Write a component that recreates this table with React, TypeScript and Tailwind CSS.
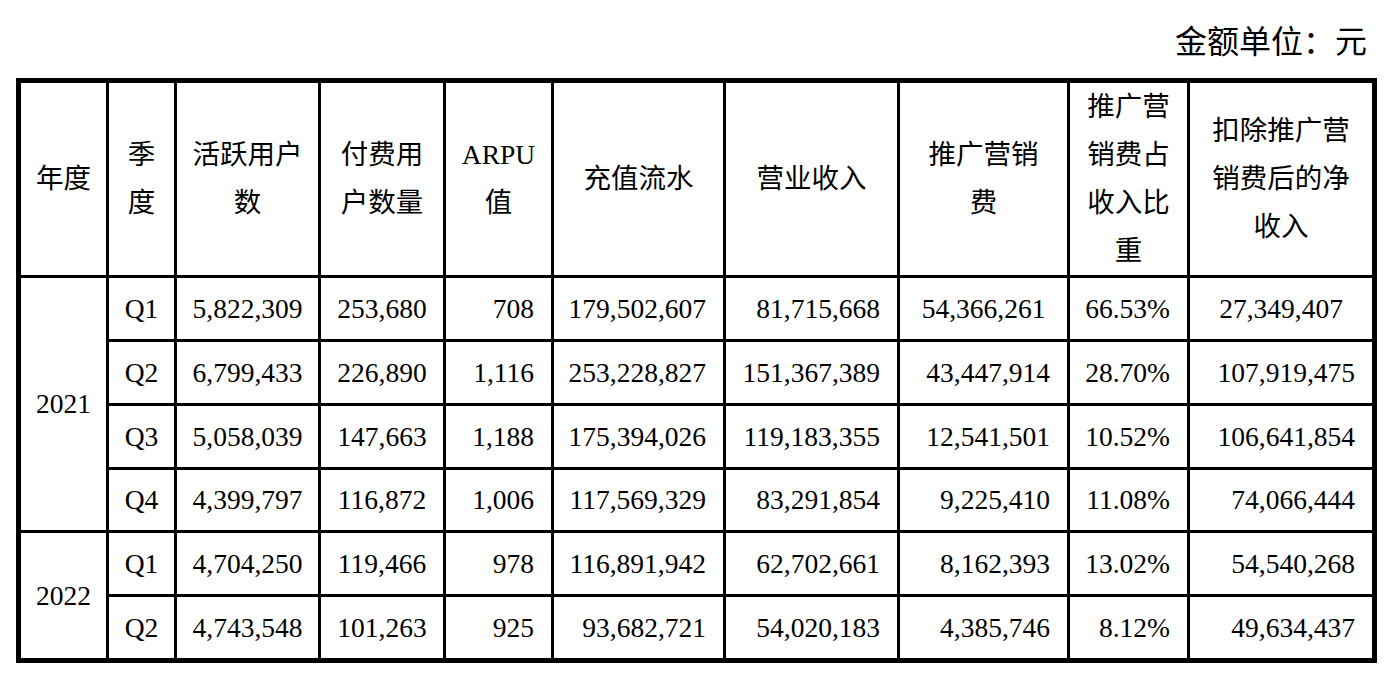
import clsx from 'clsx'

type Row = {
  year?: { label: string; span: 'row-span-4' | 'row-span-2'; last: boolean }
  values: string[]
  centered: number[]
  last?: boolean
}

const rows: Row[] = [
  {
    year: { label: '2021', span: 'row-span-4', last: false },
    values: ['Q1', '5,822,309', '253,680', '708', '179,502,607', '81,715,668', '54,366,261', '66.53%', '27,349,407'],
    centered: [6, 8],
  },
  {
    values: ['Q2', '6,799,433', '226,890', '1,116', '253,228,827', '151,367,389', '43,447,914', '28.70%', '107,919,475'],
    centered: [],
  },
  {
    values: ['Q3', '5,058,039', '147,663', '1,188', '175,394,026', '119,183,355', '12,541,501', '10.52%', '106,641,854'],
    centered: [],
  },
  {
    values: ['Q4', '4,399,797', '116,872', '1,006', '117,569,329', '83,291,854', '9,225,410', '11.08%', '74,066,444'],
    centered: [],
  },
  {
    year: { label: '2022', span: 'row-span-2', last: true },
    values: ['Q1', '4,704,250', '119,466', '978', '116,891,942', '62,702,661', '8,162,393', '13.02%', '54,540,268'],
    centered: [],
  },
  {
    values: ['Q2', '4,743,548', '101,263', '925', '93,682,721', '54,020,183', '4,385,746', '8.12%', '49,634,437'],
    centered: [],
    last: true,
  },
]

const headers: string[][] = [
  ['年度'],
  ['季', '度'],
  ['活跃用户', '数'],
  ['付费用', '户数量'],
  ['ARPU', '值'],
  ['充值流水'],
  ['营业收入'],
  ['推广营销', '费'],
  ['推广营', '销费占', '收入比', '重'],
  ['扣除推广营', '销费后的净', '收入'],
]

const Cell = ({
  children,
  className,
  lastCol,
  lastRow,
}: {
  children: React.ReactNode
  className?: string
  lastCol?: boolean
  lastRow?: boolean
}) => (
  <div
    className={clsx(
      'flex items-center border-black whitespace-nowrap',
      !lastCol && 'border-r-[3px]',
      !lastRow && 'border-b-[3px]',
      className,
    )}
  >
    {children}
  </div>
)

export default function App() {
  return (
    <div className="min-h-[680px] w-[1395px] bg-white text-black font-['Liberation_Serif','Noto_Sans_CJK_SC',serif]">
      <div className="h-[78px] pt-[26px] pr-[28px] text-right text-[32px] leading-[32px]">金额单位：元</div>

      <div className="ml-[16px] grid w-[1361px] grid-cols-[88px_68px_144px_125px_108px_172px_174px_170px_120px_182px] grid-rows-[195px_64px_64px_64px_63px_64px_61px] border-[5px] border-black text-[27.5px]">
        {headers.map((lines, idx) => (
          <Cell key={idx} lastCol={idx === headers.length - 1} className="justify-center text-center leading-[48px]">
            <div>
              {lines.map((line) => (
                <div key={line}>{line}</div>
              ))}
            </div>
          </Cell>
        ))}

        {rows.map((row, rowIdx) => [
          row.year ? (
            <Cell key={`year-${rowIdx}`} lastRow={row.year.last} className={clsx(row.year.span, 'justify-center leading-none')}>
              {row.year.label}
            </Cell>
          ) : null,
          ...row.values.map((value, colIdx) => {
            const center = colIdx < 3 || row.centered.includes(colIdx)
            return (
              <Cell
                key={`${rowIdx}-${colIdx}`}
                lastCol={colIdx === row.values.length - 1}
                lastRow={row.last}
                className={clsx('leading-none', center ? 'justify-center' : 'justify-end pr-[17px]')}
              >
                {value}
              </Cell>
            )
          }),
        ])}
      </div>
    </div>
  )
}
